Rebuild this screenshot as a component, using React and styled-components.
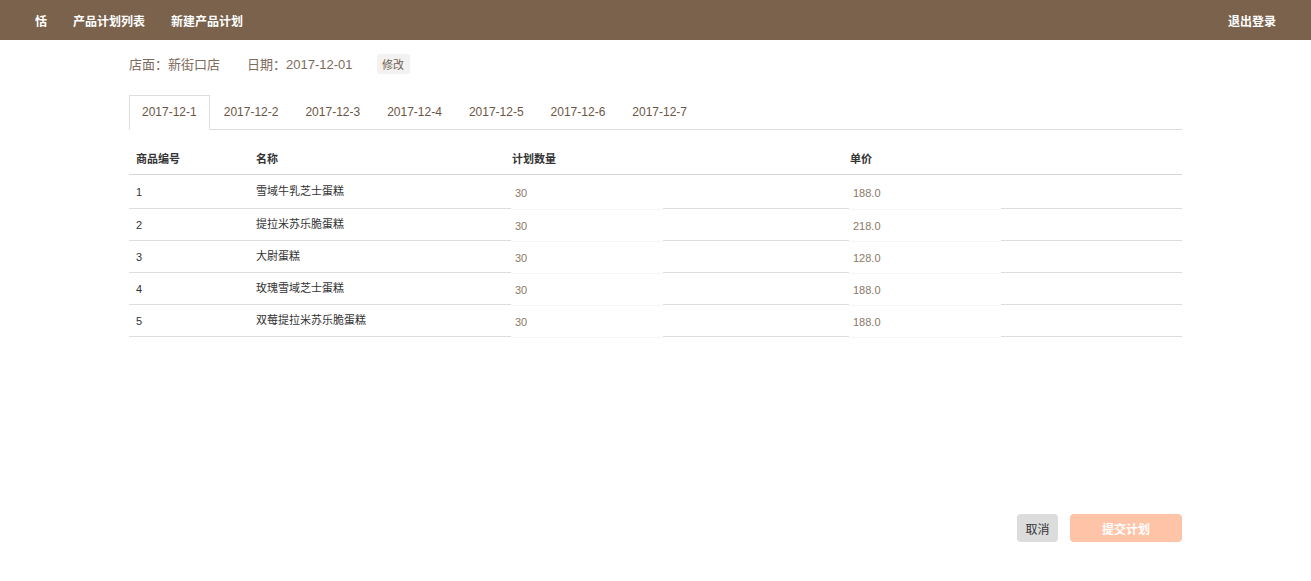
import React from "react";
import styled, { createGlobalStyle } from "styled-components";

const GlobalStyle = createGlobalStyle`
  html, body {
    margin: 0;
    padding: 0;
    background: #fff;
    font-family: "Liberation Sans", Arial, "Noto Sans CJK SC", sans-serif;
  }
  * {
    box-sizing: border-box;
  }
`;

const brown = "#7a624c";

const Page = styled.div`
  display: flex;
  flex-direction: column;
  height: 100vh;
  min-height: 581px;
`;

const NavBar = styled.nav`
  height: 40px;
  background-color: ${brown};
  display: flex;
  align-items: center;
  justify-content: space-between;
  padding: 0 35px;
`;

const NavGroup = styled.div`
  display: flex;
  gap: 26px;
`;

const NavLink = styled.a`
  color: #fff;
  font-size: 12px;
  font-weight: bold;
  text-decoration: none;
  cursor: pointer;
`;

const Main = styled.div`
  flex: 1;
  width: 1053px;
  margin: 0 auto;
`;

const InfoBar = styled.div`
  display: flex;
  align-items: center;
  height: 52px;
  padding-bottom: 5px;
  font-size: 13px;
  color: #7d6b5c;
`;

const InfoItem = styled.span`
  margin-right: ${(p) => p.gap || 27}px;
`;

const EditBtn = styled.button`
  border: none;
  background: #f3f2f1;
  color: #6f5f50;
  font-size: 11px;
  font-family: inherit;
  height: 20px;
  width: 33px;
  padding: 0;
  border-radius: 2px;
  cursor: pointer;
`;

const Tabs = styled.ul`
  display: flex;
  list-style: none;
  margin: 3px 0 0;
  padding: 0;
  border-bottom: 1px solid #ddd;
`;

const Tab = styled.li`
  height: 35px;
  line-height: 33px;
  padding: 0 12px;
  margin-right: 1px;
  margin-bottom: -1px;
  font-size: 12px;
  color: #6b5645;
  border: 1px solid ${(p) => (p.active ? "#ddd" : "transparent")};
  border-bottom-color: ${(p) => (p.active ? "#fff" : "transparent")};
  background: ${(p) => (p.active ? "#fff" : "transparent")};
  cursor: pointer;
`;

const Table = styled.div`
  margin-top: 14px;
  font-size: 11px;
  color: #333;
`;

const Row = styled.div`
  display: grid;
  grid-template-columns: 120px 256px 338px 1fr;
  height: ${(p) => (p.head ? 31 : 32)}px;
  border-bottom: 1px solid ${(p) => (p.head ? "#d6d6d6" : "#ddd")};
  align-items: center;

  &:nth-child(2) {
    height: 34px;
  }
`;

const HeadCell = styled.div`
  padding: 0 7px;
  padding-bottom: 2px;
  font-weight: bold;
`;

const Cell = styled.div`
  padding: 0 7px;
  padding-bottom: ${(p) => (p.up ? 4 : 0)}px;
  align-self: ${(p) => (p.input ? "stretch" : "center")};
  display: flex;
  align-items: center;
`;

const QtyInput = styled.input`
  width: 152px;
  height: calc(100% + 1px);
  margin: 2px 0 -1px -1px;
  border: none;
  outline: none;
  background: linear-gradient(#fff calc(100% - 1px), #f6f6f6 0);
  color: #8b7867;
  font-size: 11px;
  font-family: inherit;
  padding: 0 4px;
  position: relative;
`;

const Footer = styled.div`
  width: 1053px;
  margin: 0 auto 39px;
  display: flex;
  justify-content: flex-end;
  gap: 12px;
`;

const Button = styled.button`
  height: 28px;
  border: none;
  border-radius: 4px;
  font-size: 12px;
  font-family: inherit;
  cursor: pointer;
  padding: 0;
  width: ${(p) => (p.primary ? 112 : 41)}px;
  background: ${(p) => (p.primary ? "#ffc4a8" : "#dcdcdc")};
  color: ${(p) => (p.primary ? "#fff" : "#333")};
  font-weight: ${(p) => (p.primary ? "bold" : "normal")};
`;

const tabs = ["2017-12-1", "2017-12-2", "2017-12-3", "2017-12-4", "2017-12-5", "2017-12-6", "2017-12-7"];

const products = [
  { id: 1, name: "雪域牛乳芝士蛋糕", qty: 30, price: "188.0" },
  { id: 2, name: "提拉米苏乐脆蛋糕", qty: 30, price: "218.0" },
  { id: 3, name: "大尉蛋糕", qty: 30, price: "128.0" },
  { id: 4, name: "玫瑰雪域芝士蛋糕", qty: 30, price: "188.0" },
  { id: 5, name: "双莓提拉米苏乐脆蛋糕", qty: 30, price: "188.0" },
];

const App = () => {
  return (
    <Page>
      <GlobalStyle />
      <NavBar>
        <NavGroup>
          <NavLink>恬</NavLink>
          <NavLink>产品计划列表</NavLink>
          <NavLink>新建产品计划</NavLink>
        </NavGroup>
        <NavLink>退出登录</NavLink>
      </NavBar>

      <Main>
        <InfoBar>
          <InfoItem>店面：新街口店</InfoItem>
          <InfoItem gap={24}>日期：2017-12-01</InfoItem>
          <EditBtn>修改</EditBtn>
        </InfoBar>

        <Tabs>
          {tabs.map((t, i) => (
            <Tab key={t} active={i === 0}>
              {t}
            </Tab>
          ))}
        </Tabs>

        <Table>
          <Row head>
            <HeadCell>商品编号</HeadCell>
            <HeadCell>名称</HeadCell>
            <HeadCell>计划数量</HeadCell>
            <HeadCell>单价</HeadCell>
          </Row>
          {products.map((p) => (
            <Row key={p.id}>
              <Cell>{p.id}</Cell>
              <Cell up>{p.name}</Cell>
              <Cell input>
                <QtyInput defaultValue={p.qty} />
              </Cell>
              <Cell input>
                <QtyInput defaultValue={p.price} />
              </Cell>
            </Row>
          ))}
        </Table>
      </Main>

      <Footer>
        <Button>取消</Button>
        <Button primary>提交计划</Button>
      </Footer>
    </Page>
  );
};

export default App;
